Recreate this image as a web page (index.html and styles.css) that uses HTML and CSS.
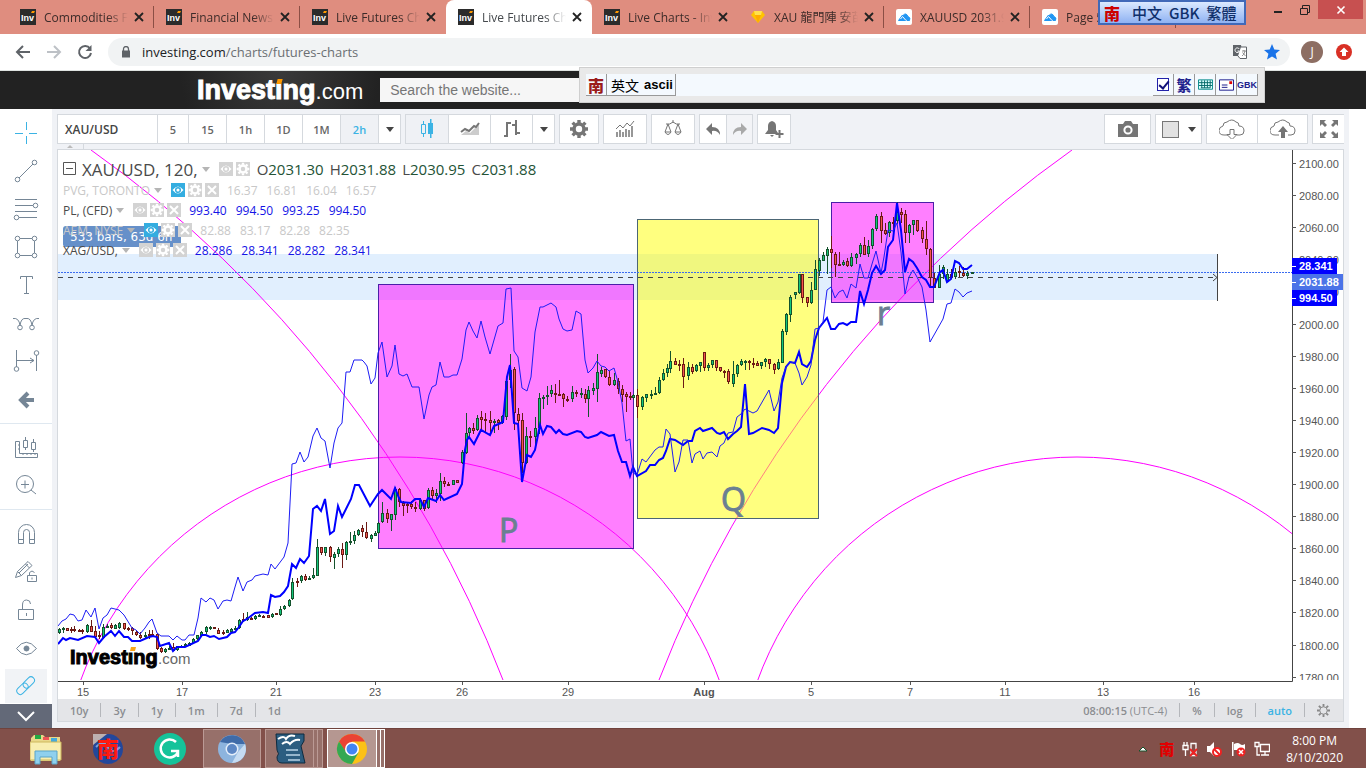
FILE: index.html
```
<!DOCTYPE html>
<html lang="en">
<head>
  <meta charset="UTF-8">
  <title>Live Futures Charts</title>
  <meta name="viewport" content="width=device-width, initial-scale=1.0">
  <link rel="stylesheet" href="styles.css">
</head>
<body>
  <!-- Shared icons -->
  <svg class="sprite" aria-hidden="true">
    <symbol id="inv" viewBox="0 0 16 16">
      <rect width="16" height="16" fill="#2b2b2b"/>
      <text x="1" y="12" font-family="Liberation Sans" font-weight="bold" font-size="9" fill="#fff">Inv</text>
      <path d="M11 4l1-2h3l-1 2z" fill="#f90"/>
    </symbol>
    <symbol id="cloudapp" viewBox="0 0 16 16">
      <rect width="16" height="16" rx="2" fill="#fff"/>
      <path d="M2.500 11.500L6.500 6l3.500 5.500zM7 6.500Q10 3 12 7.500q3 1 1.500 4H11z" fill="#2196f3" stroke="#2196f3"/>
      <path d="M4.500 10l2-2.500L10 11.500" fill="none" stroke="#fff"/>
    </symbol>
    <symbol id="close" viewBox="0 0 10 10"><path d="M1 1l8 8M9 1L1 9" stroke="#222" stroke-width="1.800"/></symbol>
    <symbol id="eye" viewBox="0 0 14 14">
      <path d="M1.500 7Q7 0 12.500 7Q7 14 1.500 7z" fill="#fff"/>
      <circle cx="7" cy="7" r="2.300" fill="none" stroke="currentColor" stroke-width="1.500"/>
    </symbol>
    <symbol id="cog" viewBox="0 0 20 20">
      <circle cx="10" cy="10" r="5" fill="none" stroke="currentColor" stroke-width="3.600"/>
      <path d="M10 1v3M10 16v3M1 10h3M16 10h3M3.600 3.600l2 2M14.400 14.400l2 2M3.600 16.400l2-2M14.400 5.600l2-2" stroke="currentColor" stroke-width="3.400"/>
    </symbol>
    <symbol id="cross" viewBox="0 0 14 14"><path d="M3 3l8 8M11 3l-8 8" stroke="#fff" stroke-width="2"/></symbol>
  </svg>

  <!-- Browser tabs -->
  <div class="tabs">
    <div class="tab"><svg class="fav"><use href="#inv"/></svg><span>Commodities Futures</span><button aria-label="Close tab"><svg><use href="#close"/></svg></button></div>
    <div class="tab"><svg class="fav"><use href="#inv"/></svg><span>Financial News</span><button aria-label="Close tab"><svg><use href="#close"/></svg></button></div>
    <div class="tab no-line"><svg class="fav"><use href="#inv"/></svg><span>Live Futures Charts</span><button aria-label="Close tab"><svg><use href="#close"/></svg></button></div>
    <div class="tab active"><svg class="fav"><use href="#inv"/></svg><span>Live Futures Charts</span><button aria-label="Close tab"><svg><use href="#close"/></svg></button></div>
    <div class="tab"><svg class="fav"><use href="#inv"/></svg><span>Live Charts - Investing</span><button aria-label="Close tab"><svg><use href="#close"/></svg></button></div>
    <div class="tab"><svg class="fav" viewBox="0 0 16 16"><path d="M4 2h8l3 4-7 8-7-8z" fill="#ffc400"/><path d="M4 2h8l-1 4H5z" fill="#ffe14d"/><path d="M5 6h6l-3 8z" fill="#ffab00"/></svg><span>XAU 龍門陣 安苗</span><button aria-label="Close tab"><svg><use href="#close"/></svg></button></div>
    <div class="tab"><svg class="fav"><use href="#cloudapp"/></svg><span>XAUUSD 2031.9</span><button aria-label="Close tab"><svg><use href="#close"/></svg></button></div>
    <div class="tab"><svg class="fav"><use href="#cloudapp"/></svg><span>Page 5</span></div>
    <div class="window-buttons">
      <button class="win" aria-label="Minimize"><svg viewBox="0 0 12 12"><path d="M2 8h8" stroke="#222" stroke-width="2"/></svg></button>
      <button class="win" aria-label="Restore"><svg viewBox="0 0 12 12" fill="none" stroke="#222"><path d="M1.500 4.500h7v6h-7zM3.500 4V1.500h7v7H9"/></svg></button>
      <button class="win win-close" aria-label="Close"><svg viewBox="0 0 12 12"><path d="M2.500 2.500l7 7M9.500 2.500l-7 7" stroke="#fff" stroke-width="1.600"/></svg></button>
    </div>
    <div class="ime-top"><b>南</b><span>中文</span><span>GBK</span><span>繁體</span></div>
  </div>

  <!-- Address bar -->
  <div class="address">
    <button aria-label="Back"><svg viewBox="0 0 16 16"><path d="M15 8H2M8 2L2 8l6 6" fill="none" stroke="#5f6368" stroke-width="2"/></svg></button>
    <button aria-label="Forward"><svg viewBox="0 0 16 16"><path d="M1 8h13M8 2l6 6-6 6" fill="none" stroke="#bdc1c6" stroke-width="2"/></svg></button>
    <button aria-label="Reload"><svg viewBox="0 0 16 16"><path d="M13 4.500A6 6 0 1 0 14 9" fill="none" stroke="#5f6368" stroke-width="2"/><path d="M14.500 1v6h-6z" fill="#5f6368"/></svg></button>
    <div class="omnibox">
      <svg viewBox="0 0 10 12" class="lock"><path d="M1 4.500h8v7H1z" fill="#5f6368"/><path d="M2.500 5V3a2.500 2.500 0 0 1 5 0v2" fill="none" stroke="#5f6368" stroke-width="1.300"/></svg>
      <a href="#" class="url"><b>investing.com</b>/charts/futures-charts</a>
      <svg viewBox="0 0 16 16" class="translate"><path d="M1 1h8l2 11H1z" fill="#5f6368"/><path d="M9 3h5.500v11.500H8L6 12" fill="#fff" stroke="#5f6368"/><path d="M7.300 5A2.300 2.300 0 1 0 7.500 7H5.500" stroke="#fff" fill="none"/><path d="M10 7h4M12 6v1M13 7q-1 4-3 5M10.500 8.500l3 3.500" fill="none" stroke="#777" stroke-width=".8"/></svg>
      <svg viewBox="0 0 16 16" class="star"><path d="M8 0l2.300 5.500 5.700.5-4.400 3.800L13 15.500 8 12.400 3 15.500l1.400-5.700L0 6l5.700-.5z" fill="#1a73e8"/></svg>
    </div>
    <span class="avatar">J</span>
    <button aria-label="Update"><svg viewBox="0 0 16 16"><circle cx="8" cy="8" r="8" fill="#d93025"/><path d="M8 3.500l4.500 4.500H10v4H6V8H3.500z" fill="#fff"/></svg></button>
  </div>

  <!-- Site header -->
  <header class="site-header">
    <a href="#" class="logo">Invest<i>ı</i>ng<small>.com</small></a>
    <input type="text" class="search" placeholder="Search the website..." aria-label="Search the website">
    <div class="ime-bar">
      <b class="nan">南</b><span class="mode">英文 <b>ascii</b></span>
      <div class="ime-tools">
        <label><input type="checkbox" checked aria-label="Enable"></label>
        <span>繁</span>
        <span><svg viewBox="0 0 16 12"><path d="M.5.500h15v10H.500z" fill="#dff" stroke="#088"/><path d="M1 3.500h14M1 6.500h14M4 1v8M7 1v8M10 1v8M13 1v8M3 9h10" stroke="#066"/></svg></span>
        <span><svg viewBox="0 0 16 12"><path d="M.5.500h15v11H.500z" fill="#fff" stroke="#118"/><path d="M3 6h6M3 8.500h6" stroke="#118"/><path d="M11 2h3v3h-3z" fill="#d00"/></svg></span>
        <span class="gbk">GBK</span>
      </div>
    </div>
  </header>

  <main class="workspace">
    <!-- Drawing tools -->
    <nav class="tools">
      <button aria-label="Cross" class="on"><svg viewBox="0 0 24 24"><path d="M1 12.500h8M15 12.500h8M12.500 1v8M12.500 15v8"/></svg></button>
      <button aria-label="Trend line"><svg viewBox="0 0 24 24"><circle cx="3.500" cy="20.500" r="2.300"/><circle cx="20.500" cy="3.500" r="2.300"/><path d="M5 19L19 5"/></svg></button>
      <button aria-label="Fibonacci"><svg viewBox="0 0 24 24"><path d="M1 2.500h22M1 8.500h18M1 14.500h22M5 20.500h18"/><circle cx="21.500" cy="8.500" r="2.300"/><circle cx="2.500" cy="20.500" r="2.300"/></svg></button>
      <button aria-label="Shapes"><svg viewBox="0 0 24 24"><path d="M6 3.500h12M6 20.500h12M3.500 6v12M20.500 6v12"/><circle cx="3.500" cy="3.500" r="2.300"/><circle cx="20.500" cy="3.500" r="2.300"/><circle cx="3.500" cy="20.500" r="2.300"/><circle cx="20.500" cy="20.500" r="2.300"/></svg></button>
      <button aria-label="Text"><svg viewBox="0 0 24 24"><path d="M6.500 6V3.500h12V6M12.500 3.500v17M10 20.500h5"/></svg></button>
      <button aria-label="Patterns"><svg viewBox="0 0 24 24"><path d="M-1 7.500q6-1 7 7q1-8 6-7q5-1 6 7q1-8 7-7"/><circle cx="6" cy="16.500" r="2.300"/><circle cx="18" cy="16.500" r="2.300"/></svg></button>
      <button aria-label="Forecast"><svg viewBox="0 0 24 24"><path d="M2.500 1v17M22.500 6v16M3 11.500h17M16 9l4 2.500-4 2.500"/><circle cx="2.500" cy="20" r="2.300"/><circle cx="22.500" cy="4" r="2.300"/></svg></button>
      <button aria-label="Arrow"><svg viewBox="0 0 24 24"><path d="M20 13H7M14 6l-7 7 7 7" stroke-width="4"/></svg></button>
      <hr>
      <button aria-label="Measure"><svg viewBox="0 0 24 24"><path d="M1.500 6.500h4v12h18v4h-22zM9 18v2M13 18v2M17 18v2M21 18v2M6 10H4M6 14H4M9.500 5.500h4v7h-4zM17.500 7.500h4v7h-4zM11.500 2v3M11.500 13v2M19.500 4v3M19.500 15v2"/></svg></button>
      <button aria-label="Zoom"><svg viewBox="0 0 24 24"><circle cx="11" cy="11" r="8.500"/><path d="M17 17l5 4M7 11.500h8M11 7.500v8"/></svg></button>
      <hr>
      <button aria-label="Magnet"><svg viewBox="0 0 24 24"><path d="M4.500 22.500v-11a8 8 0 0 1 16 0v11h-5v-11a3 3 0 0 0-6 0v11zM4.500 18.500h5M15.500 18.500h5"/></svg></button>
      <button aria-label="Stay in drawing mode"><svg viewBox="0 0 24 24"><path d="M1.500 18.500l2-6L14 2.500l4 4L7.500 16.500zM3.500 12.500l4 4M11.500 5l4 4M5 14l9-9"/><path d="M13.500 16.500h9v6h-9zM15.500 16v-2.500q2.500-3 5 0M18 18.500v2"/></svg></button>
      <button aria-label="Lock drawings"><svg viewBox="0 0 24 24"><path d="M4.500 12.500h15v10h-15zM8.500 12V8q0-5 4-5t4 4M12.500 16v3"/></svg></button>
      <button aria-label="Hide drawings"><svg viewBox="0 0 24 24"><path d="M2.500 13.500Q12 1 22.500 13.500Q12 26 2.500 13.500z"/><circle cx="12.500" cy="13.500" r="2.500" fill="#758696"/></svg></button>
      <button aria-label="Link" class="on picked"><svg viewBox="0 0 24 24"><g transform="rotate(-45 12 12)"><rect x="1" y="8" width="13" height="7" rx="3.500"/><rect x="10" y="8" width="13" height="7" rx="3.500"/></g></svg></button>
      <button class="more" aria-label="More tools"><svg viewBox="0 0 24 24"><path d="M4 8l8 8 8-8"/></svg></button>
    </nav>

    <section class="panel">
      <div class="toolbar">
        <div class="group"><button class="symbol">XAU/USD</button><button class="w31">5</button><button>15</button><button>1h</button><button>1D</button><button>1M</button><button class="on">2h</button><button class="caret" aria-label="Intervals"></button></div>
        <div class="group">
          <button class="w43 on" aria-label="Candles"><svg viewBox="0 0 20 20"><path d="M6.500 2v3M6.500 15v3M4.500 5.500h4v9h-4z" fill="none" stroke="currentColor"/><path d="M11 4h5v11h-5zM13 0h1.500v19H13z" fill="currentColor"/></svg></button>
          <button class="w43" aria-label="Area"><svg viewBox="0 0 20 20"><path d="M1 16l5-4 4 2 9-9v11z" fill="#ccc"/><path d="M1 13l4-3 4 2 5-5 2 1 3-4" fill="none" stroke="currentColor" stroke-width="2"/></svg></button>
          <button class="w43" aria-label="Bars"><svg viewBox="0 0 20 20"><path d="M2 17h4M5 18V3M5 4h4M14 1v15M10 6h4M14 14h4" fill="none" stroke="currentColor" stroke-width="2"/></svg></button>
          <button class="caret" aria-label="Chart styles"></button>
        </div>
        <div class="group"><button aria-label="Properties"><svg><use href="#cog"/></svg></button></div>
        <div class="group"><button class="w43" aria-label="Indicators"><svg viewBox="0 0 20 20"><path d="M2 13v5M5 11v7M8 13v5M11 10v8M14 11v7M17 7v11" stroke="currentColor" stroke-width="1.500"/><path d="M1 10l4-4 3 3 4-5 3 3 4-5" fill="none" stroke="currentColor"/></svg></button></div>
        <div class="group"><button class="w43" aria-label="Balance"><svg viewBox="0 0 20 20"><path d="M3 5q4 1 7-2 3 3 7 2M10 1v3M5 5l-3 8h6zM15 5l-3 8h6zM2 13q3 5 6 0M12 13q3 5 6 0" fill="none" stroke="currentColor"/></svg></button></div>
        <div class="group"><button class="w27" aria-label="Undo"><svg viewBox="0 0 20 20"><path d="M3 10l6-6v4q8 0 8 8-3-5-8-4v4z" fill="currentColor"/></svg></button><button class="w27 off" aria-label="Redo"><svg viewBox="0 0 20 20"><path d="M17 10l-6-6v4q-8 0-8 8 3-5 8-4v4z" fill="currentColor"/></svg></button></div>
        <div class="group"><button class="w34" aria-label="Add alert"><svg viewBox="0 0 20 20"><path d="M1 15l3-4V7q0-4 4-5 4 1 4 5v4l2 3v1zM6 16h4l-2 2z" fill="currentColor"/><path d="M15.500 11v8M11.500 15h8" stroke="currentColor" stroke-width="2"/></svg></button></div>
        <div class="group push"><button class="w46" aria-label="Snapshot"><svg viewBox="0 0 20 20"><path d="M0 5h5l2-3h6l2 3h5v13H0z" fill="currentColor"/><circle cx="10" cy="11" r="3.600" fill="none" stroke="#fff" stroke-width="2"/></svg></button></div>
        <div class="group"><button class="w46 swatch" aria-label="Layout"><i></i></button></div>
        <div class="group">
          <button class="w51" aria-label="Load"><svg viewBox="0 0 26 20"><path d="M9 16H5Q0 16 0 11.500 0 8 4 7q0-4 4-4 5-4 9 0 3 0 3 4 5 0 5 5 0 4-4 4h-3" fill="none" stroke="currentColor"/><path d="M11 10.500h4v5h3l-5 5-5-5h3z" fill="none" stroke="currentColor"/></svg></button>
          <button class="w51" aria-label="Save"><svg viewBox="0 0 26 20"><path d="M9 16H5Q0 16 0 11.500 0 8 4 7q0-4 4-4 5-4 9 0 3 0 3 4 5 0 5 5 0 4-4 4h-3" fill="none" stroke="currentColor"/><path d="M11 19v-6H8l5-6 5 6h-3v6z" fill="currentColor"/></svg></button>
        </div>
        <div class="group"><button class="w31" aria-label="Fullscreen"><svg viewBox="0 0 20 20"><path d="M1 1h6L5 3l3 3-2 2-3-3-2 2zM19 1h-6l2 2-3 3 2 2 3-3 2 2zM1 19h6l-2-2 3-3-2-2-3 3-2-2zM19 19h-6l2-2-3-3 2-2 3 3 2-2z" fill="currentColor"/></svg></button></div>
      </div>
      <div class="fold"><i></i></div>

      <div class="chart-frame">
        <div class="chart">
          <svg id="plot" viewBox="58 150 1285 550" preserveAspectRatio="xMinYMin slice">
            <defs>
              <clipPath id="pane"><rect x="58" y="150" width="1285" height="530"/></clipPath>
              <clipPath id="canvas"><rect x="58" y="150" width="1234" height="530"/></clipPath>
            </defs>
            <rect class="range" x="58" y="254" width="1159" height="46"/>
            <g clip-path="url(#canvas)">
              <g class="arcs">
                <path d="M91 150A1160 1160 0 0 1 503 680"/>
                <path d="M659 680A1165 1165 0 0 1 1072 150"/>
                <circle cx="400" cy="797" r="340"/>
                <circle cx="1077" cy="797" r="340"/>
              </g>
              <rect class="zone pink" x="378.500" y="284.500" width="255" height="264"/>
              <rect class="zone yellow" x="637.500" y="219.500" width="181" height="299"/>
              <rect class="zone pink" x="831.500" y="202.500" width="102" height="100"/>
              <g class="letters"><text x="499" y="542">P</text><text x="721" y="511">Q</text><text x="877" y="325">r</text></g>
              <rect x="63" y="226" width="118" height="21" rx="3" class="bars-tag"/>
              <text x="70" y="241" class="bars-text">533 bars, 63d 6h</text>
              <path class="last" d="M58 272.500H1292"/>
              <path class="mid" d="M58 277.500H1213"/>
              <path class="edge" d="M1217.500 254v47M1213 274l4 3.500-4 3.500"/>
              <g id="candles"></g>
              <polyline id="silver" class="thick"/>
              <polyline id="platinum" class="thin"/>
            </g>
            <g class="watermark"><text x="70" y="664">Invest&#305;ng</text><text x="158" y="664" class="com">.com</text><path d="M130 651l1-4h5l-1 4z"/></g>
            <path class="axis" d="M58 681.500H1292.500V150"/>
            <g id="axis-y" clip-path="url(#pane)"></g>
            <g id="axis-x"></g>
            <g class="tags">
              <rect x="1292" y="258" width="45" height="16"/><text x="1299" y="270">28.341</text>
              <rect x="1292" y="290" width="45" height="16"/><text x="1299" y="302">994.50</text>
              <rect x="1292" y="274" width="51" height="16" class="price"/><text x="1299" y="286">2031.88</text>
              <path d="M1292 266.500h4M1292 282.500h4M1292 298.500h4"/>
            </g>
          </svg>

          <div class="legend">
            <div class="row main-row"><svg viewBox="0 0 14 14" class="minus"><path d="M.5.500h12v12H.500zM3 6.500h7"/></svg><span class="name">XAU/USD, 120,</span><i class="tri"></i><b class="sq"><svg><use href="#eye"/></svg></b><b class="sq"><svg><use href="#cog"/></svg></b><span class="ohlc">O<em>2031.30</em></span><span class="ohlc">H<em>2031.88</em></span><span class="ohlc">L<em>2030.95</em></span><span class="ohlc">C<em>2031.88</em></span></div>
            <div class="row dim"><span class="name">PVG, TORONTO</span><i class="tri"></i><b class="sq hidden"><svg><use href="#eye"/></svg></b><b class="sq"><svg><use href="#cog"/></svg></b><b class="sq"><svg><use href="#cross"/></svg></b><span class="val">16.37</span><span class="val">16.81</span><span class="val">16.04</span><span class="val">16.57</span></div>
            <div class="row"><span class="name">PL, (CFD)</span><i class="tri"></i><b class="sq"><svg><use href="#eye"/></svg></b><b class="sq"><svg><use href="#cog"/></svg></b><b class="sq"><svg><use href="#cross"/></svg></b><span class="val">993.40</span><span class="val">994.50</span><span class="val">993.25</span><span class="val">994.50</span></div>
            <div class="row dim"><span class="name">AEM, NYSE</span><i class="tri"></i><b class="sq hidden"><svg><use href="#eye"/></svg></b><b class="sq"><svg><use href="#cog"/></svg></b><b class="sq"><svg><use href="#cross"/></svg></b><span class="val">82.88</span><span class="val">83.17</span><span class="val">82.28</span><span class="val">82.35</span></div>
            <div class="row"><span class="name">XAG/USD,</span><i class="tri"></i><b class="sq"><svg><use href="#eye"/></svg></b><b class="sq"><svg><use href="#cog"/></svg></b><b class="sq"><svg><use href="#cross"/></svg></b><span class="val">28.286</span><span class="val">28.341</span><span class="val">28.282</span><span class="val">28.341</span></div>
          </div>
        </div>
        <div class="ranges">
          <button>10y</button><button>3y</button><button>1y</button><button>1m</button><button>7d</button><button>1d</button>
          <span class="clock"><b>08:00:15</b> (UTC-4)</span><button>%</button><button>log</button><button class="auto">auto</button><button aria-label="Settings"><svg viewBox="0 0 14 14" fill="none" stroke="#888"><circle cx="7" cy="7" r="4"/><path stroke-width="2" d="M7 0v3M7 11v3M0 7h3M11 7h3M2 2l2 2M10 10l2 2M2 12l2-2M10 4l2-2"/></svg></button>
        </div>
      </div>
    </section>
    <aside class="side"></aside>
  </main>

  <!-- Windows taskbar -->
  <footer class="taskbar">
    <button class="app" aria-label="File Explorer"><svg viewBox="0 0 32 32"><path d="M1 5l3-3h9l2 2h15v24H1z" fill="#e9d88a"/><path d="M5 2h6v4H5z" fill="#2a4"/><path d="M13 4h6v3h-6z" fill="#e55"/><path d="M21 5h6v4h-6z" fill="#4ad"/><path d="M0 9h31v18H0z" fill="#f8eeb0" stroke="#cdb85d"/><path d="M5 31V18h22v13h-5v-7H10v7z" fill="#8fd0ee" stroke="#5ba5c9"/></svg></button>
    <button class="app" aria-label="Input method"><svg viewBox="0 0 32 32"><circle cx="16" cy="16" r="15" fill="#23479b"/><path d="M1 1h14L1 12z" fill="#bcb0b0"/><path d="M4 14q8-8 12 0t12 0" stroke="#7fa0dd" fill="none" stroke-width="2"/><text x="5" y="24" font-family="Noto Sans CJK TC" font-size="22" font-weight="900" fill="#ff1a10">南</text></svg></button>
    <button class="app" aria-label="Grammarly"><svg viewBox="0 0 32 32"><circle cx="16" cy="16" r="16" fill="#15c39a"/><path d="M22 9a9 9 0 1 0 2 10M17 18h7v6" fill="none" stroke="#fff" stroke-width="2.500"/></svg></button>
    <button class="app open" aria-label="Chromium"><svg viewBox="0 0 32 32"><circle cx="16" cy="16" r="14" fill="#8db4de"/><path d="M4 9a14 14 0 0 1 25 2H16z" fill="#3f6ba8"/><path d="M16 30l6-11 7-8a14 14 0 0 1-13 19z" fill="#c5dbf2"/><circle cx="16" cy="16" r="6.500" fill="#e4eefa"/><circle cx="16" cy="16" r="5" fill="#5c87c4"/></svg></button>
    <button class="app open stack" aria-label="Writer"><svg viewBox="0 0 32 32"><path d="M2 1h28v7l-3 5 4 17H8q-5 0-5-6 3-3 0-7z" fill="#2c5d80" stroke="#0d2a3f"/><path d="M4 6q6-4 8 0 3-5 9-3M8 11q5-4 8 0 4-5 10-4" fill="none" stroke="#fff" stroke-width="2"/><path d="M12 17h12M12 22h14M14 27h12" stroke="#b9d3e6" stroke-width="1.500"/></svg></button>
    <button class="app open stack current" aria-label="Chrome"><svg viewBox="0 0 32 32"><circle cx="16" cy="16" r="15" fill="#fbc116"/><path d="M3 8.500a15 15 0 0 1 26 0H16l-6 11z" fill="#ea4335"/><path d="M3 8.500a15 15 0 0 0 13 22.500l6.500-11.500-12 0z" fill="#34a853"/><circle cx="16" cy="16" r="7" fill="#fff"/><circle cx="16" cy="16" r="5.500" fill="#4285f4"/></svg></button>
    <div class="tray">
      <svg viewBox="0 0 16 16" class="up"><path d="M4 10l4-4 4 4z" fill="#fff"/></svg>
      <b class="tray-nan">南</b>
      <svg viewBox="0 0 16 16" fill="none" stroke="#fff"><path d="M2 1v3M5 1v3M1 4.500h5v4H1zM3.500 9v6M9 2.500h5v12H9z" stroke-width="1.300"/><path d="M8 8l7 7M15 8l-7 7" stroke="#e22" stroke-width="2"/></svg>
      <svg viewBox="0 0 16 16"><path d="M1 5h3l4-4v14l-4-4H1z" fill="#fff"/><circle cx="11" cy="11" r="4" fill="#fff" stroke="#e22" stroke-width="2"/><path d="M8 8l6 6" stroke="#e22" stroke-width="2"/></svg>
      <svg viewBox="0 0 16 16"><path d="M2 1h1.500v14H2zM4 3q4-2 6 0t5 0v6H4z" fill="#fff"/><circle cx="11" cy="11" r="4.500" fill="#e22"/><path d="M9 9l4 4M13 9l-4 4" stroke="#fff" stroke-width="1.500"/></svg>
      <svg viewBox="0 0 16 16" fill="none" stroke="#fff" stroke-width="1.300"><path d="M6.500 3.500h9v7h-9zM7 14h8M11 11v3M1 1.500h4v4H1zM3 6v8h3"/></svg>
      <div class="time">8:00 PM<br>8/10/2020</div>
    </div>
  </footer>

  <script src="chart.js"></script>
</body>
</html>
```

FILE: chart.js
```
const NS = 'http://www.w3.org/2000/svg';

// x, high, body top, body bottom, low, direction
const candles = `59 628 629 633 634 u,63 627 628 630 633 u,67 628 628 631 631 d,71 627 629 631 633 d,74 626 629 631 632 d,79 629 630 631 632 d,82 629 630 632 634 d,87 624 625 632 633 u,91 620 626 632 632 d,95 626 631 637 639 d,99 631 635 637 639 d,103 624 627 638 639 u,107 624 626 628 628 u,111 623 625 628 629 d,115 624 625 629 629 u,119 622 623 628 629 u,124 623 623 629 630 d,128 627 628 630 631 d,132 627 628 631 635 d,136 630 632 635 636 d,140 632 635 638 639 d,145 632 635 637 638 u,149 630 634 636 639 d,152 630 634 635 636 d,157 633 634 649 650 d,161 647 648 652 653 d,165 648 649 652 653 u,169 646 648 649 650 u,173 643 647 651 651 d,177 646 646 650 651 u,181 645 646 647 648 u,185 643 644 646 647 u,189 642 643 646 646 u,193 638 639 643 643 u,197 635 635 639 640 u,201 631 632 636 636 u,206 626 627 632 634 u,210 626 627 629 630 u,214 627 627 629 629 d,218 628 630 634 634 d,223 630 632 633 635 d,227 629 630 633 633 u,231 628 629 632 632 u,235 626 628 630 630 u,239 619 620 628 629 u,243 613 619 621 622 d,247 612 617 620 621 u,251 617 618 620 620 d,255 615 616 619 620 u,259 614 615 617 617 u,263 615 616 617 618 d,268 615 615 618 618 d,272 613 614 617 618 u,276 613 613 615 615 d,280 606 609 615 616 u,284 605 606 609 610 u,289 599 600 606 607 u,292 578 582 599 600 u,297 578 581 583 587 d,301 575 576 581 583 u,305 574 576 580 581 d,309 576 578 580 580 u,313 568 575 578 579 u,317 539 547 576 576 u,321 547 547 553 555 d,325 547 547 553 556 u,330 546 547 557 562 d,334 552 554 558 569 u,338 547 549 554 557 u,342 543 549 555 568 d,346 541 542 555 560 u,350 532 541 542 545 u,354 531 535 541 544 u,358 529 530 535 536 u,362 525 528 532 537 d,366 522 532 538 539 d,371 534 535 539 542 u,375 531 533 536 536 u,378 522 523 533 534 u,382 502 513 522 523 u,387 509 513 519 523 d,391 514 514 520 531 u,395 487 489 515 520 u,399 488 489 502 507 d,403 501 503 506 516 d,407 503 504 506 513 d,411 501 504 507 509 d,415 502 507 509 512 d,420 498 500 509 510 u,424 500 500 509 511 d,428 488 490 508 509 u,432 487 490 496 499 d,436 489 493 496 503 u,440 473 481 494 501 u,444 477 481 484 487 d,448 482 484 485 486 d,453 480 480 485 485 u,457 480 480 483 483 d,462 450 452 463 464 u,466 413 433 453 454 u,469 427 428 433 438 u,473 423 428 431 434 d,477 415 418 430 431 u,481 411 417 420 431 d,485 413 419 421 432 d,490 411 420 423 433 d,494 419 421 423 433 u,498 419 420 423 430 d,502 415 416 423 424 u,506 378 381 417 420 u,510 354 370 380 388 u,514 367 369 413 430 d,518 408 414 421 424 d,522 413 420 463 473 d,526 427 436 463 464 u,530 431 436 437 447 d,535 417 428 437 450 u,539 393 398 428 434 u,543 395 397 399 409 u,547 386 395 397 405 u,551 385 390 394 397 u,555 384 393 394 403 d,559 380 394 395 396 d,563 393 394 399 407 d,567 396 399 400 402 d,572 386 392 399 402 u,576 390 392 394 397 d,581 388 393 394 398 u,585 389 394 399 403 d,588 386 390 399 417 u,593 383 388 391 395 u,597 354 372 389 402 u,601 367 370 374 377 u,605 369 369 377 378 d,609 371 377 385 386 d,614 373 380 385 386 u,618 378 381 389 394 d,622 385 389 395 402 d,626 392 394 397 412 d,630 392 396 398 400 d,633 394 395 398 400 u,637 389 395 407 418 d,642 396 397 407 410 u,646 394 394 398 402 u,651 390 394 395 399 u,655 387 393 394 395 u,659 377 380 393 394 u,663 369 373 380 381 u,667 364 368 373 377 u,670 351 361 369 373 u,675 358 361 365 365 d,679 360 364 365 371 d,683 358 364 377 388 d,688 362 367 376 380 u,692 364 367 372 374 d,696 364 365 371 372 u,700 362 362 366 372 u,704 352 352 368 371 d,708 363 365 368 371 u,712 360 360 365 368 u,716 360 360 368 371 d,720 367 367 371 372 d,724 370 371 372 378 d,728 369 371 382 384 d,733 361 374 384 387 u,737 364 365 374 377 u,741 359 361 365 366 u,745 360 361 362 370 u,749 360 361 363 370 d,753 358 363 364 368 d,757 361 363 366 366 d,761 362 362 366 369 u,765 358 359 362 367 u,769 359 359 364 369 d,774 363 364 370 374 d,778 359 362 369 370 u,782 329 331 363 363 u,786 313 314 332 335 u,790 295 297 315 322 u,795 292 292 295 299 u,799 274 274 293 294 u,802 274 274 298 303 d,807 297 297 303 307 d,811 282 290 303 304 u,815 260 269 290 290 u,819 258 260 271 276 u,823 252 255 261 261 u,827 247 249 256 274 u,831 236 249 253 268 d,835 252 254 265 277 d,839 252 264 265 266 d,843 260 262 265 266 u,847 258 261 266 267 d,851 253 257 266 267 u,856 253 254 258 264 u,860 243 245 254 257 u,864 237 245 255 255 d,868 240 246 254 257 u,872 228 229 246 249 u,876 214 216 229 231 u,881 212 216 231 243 d,885 223 230 234 235 d,889 221 222 233 237 u,893 217 222 223 231 d,897 202 212 221 224 u,901 208 212 215 223 d,905 210 214 233 243 d,909 224 225 233 243 u,913 220 220 225 235 u,917 220 220 231 232 d,922 227 230 239 243 d,926 221 239 249 255 d,930 248 249 278 286 d,934 273 278 288 288 d,939 265 274 288 288 u,943 265 267 274 279 u,947 269 274 281 282 u,951 269 274 277 279 d,955 268 272 277 279 u,959 266 271 272 277 d,963 267 273 276 277 d,967 271 273 276 279 u,972 272 272 274 274 u`;

const platinum = '58,626 62,621 66,619 70,614 74,615 78,621 82,620 86,610 91,617 95,608 99,629 103,618 107,615 111,608 115,609 119,610 124,615 132,628 136,630 140,634 145,628 149,622 152,619 157,633 161,636 169,636 173,640 177,636 182,640 185,640 189,635 194,635 198,618 201,598 206,602 210,598 214,600 218,609 223,601 227,600 231,601 235,587 238,577 243,591 247,582 252,580 255,576 263,574 268,575 271,564 275,569 284,557 288,543 292,464 296,463 300,452 304,462 308,457 313,436 317,428 321,438 325,441 330,468 334,443 338,428 342,423 346,372 350,372 354,360 362,360 364,362 367,366 371,384 375,378 378,353 382,342 387,377 392,366 395,345 399,374 403,376 407,374 412,387 419,387 424,419 429,395 432,387 436,385 440,362 444,377 449,377 453,375 457,375 462,359 466,330 469,322 473,331 477,338 481,321 485,337 490,354 498,326 503,323 506,289 511,288 514,351 518,357 522,388 527,391 531,377 535,332 540,307 543,307 551,303 556,307 559,319 563,329 567,331 572,330 576,311 581,314 585,360 588,373 593,368 597,361 601,366 605,367 609,371 614,368 618,382 622,403 626,441 630,439 633,473 637,475 642,459 646,462 655,450 659,447 663,447 666,429 670,434 675,472 679,462 683,440 688,440 692,463 695,454 700,451 703,459 707,453 712,452 717,457 720,446 724,443 728,433 733,432 737,417 741,414 745,409 749,411 753,413 757,411 769,390 774,411 778,402 782,378 786,367 790,362 795,363 799,373 802,385 807,377 811,365 815,329 819,328 823,322 827,290 831,287 835,298 839,292 843,290 847,298 851,284 856,288 860,264 864,278 868,278 872,264 876,251 881,273 884,257 888,230 893,231 897,223 901,252 905,294 909,277 913,270 917,277 922,287 926,310 930,342 934,335 943,319 947,304 951,303 955,289 959,292 963,297 967,293 972,291';

const silver = '58,644 63,638 66,640 70,638 78,640 87,636 95,637 99,643 104,637 111,631 115,636 119,631 124,637 128,637 132,641 140,641 149,637 153,636 157,637 160,646 169,643 173,651 177,647 185,647 198,641 202,635 206,635 210,637 214,636 219,639 227,637 231,633 235,632 239,627 243,621 247,619 255,613 263,612 268,613 271,595 275,597 280,596 284,592 288,586 292,564 296,568 300,559 304,563 309,556 313,509 317,506 321,511 325,499 330,534 334,531 338,506 342,517 351,499 355,485 359,485 370,506 378,494 382,490 391,499 395,488 399,498 401,502 411,503 415,499 420,499 424,507 428,498 436,501 440,495 444,500 457,494 462,484 465,450 467,440 469,437 474,444 481,430 490,435 494,426 503,422 507,377 510,365 514,423 518,424 522,482 527,455 531,457 535,450 540,425 543,434 547,426 551,427 556,433 559,430 563,434 567,435 577,431 581,432 585,437 588,438 597,435 601,432 609,436 614,435 618,451 622,462 626,462 630,476 633,467 637,476 646,471 650,465 655,465 659,460 663,458 666,451 670,439 675,440 683,445 688,441 692,441 695,431 700,428 703,431 712,428 717,433 720,434 724,432 728,439 733,434 737,431 741,427 745,384 749,434 753,433 762,428 769,430 774,433 778,428 782,383 786,367 790,362 795,363 799,352 802,364 807,367 811,361 815,340 819,328 827,318 831,329 835,329 839,324 843,323 847,325 851,322 856,322 860,291 864,304 868,290 872,273 876,266 881,274 885,270 888,247 893,240 897,203 901,230 905,272 909,259 913,262 917,268 922,277 926,280 930,287 934,287 940,272 943,270 947,282 951,279 955,261 959,263 963,269 967,269 972,265';

function add(parent, tag, attrs, text) {
  const el = document.createElementNS(NS, tag);
  for (const key in attrs) el.setAttribute(key, attrs[key]);
  if (text) el.textContent = text;
  parent.appendChild(el);
}

const layer = document.getElementById('candles');
candles.split(',').forEach(row => {
  const [x, high, top, bottom, low, dir] = row.split(' ');
  const cls = dir === 'u' ? 'up' : 'down';
  add(layer, 'path', { class: cls, d: `M${+x + 0.5} ${high}V${low}` });
  add(layer, 'rect', { class: cls, x: x - 0.5, y: +top + 0.5, width: 2, height: Math.max(bottom - top - 1, 1) });
});

document.getElementById('platinum').setAttribute('points', platinum);
document.getElementById('silver').setAttribute('points', silver);

const axisY = document.getElementById('axis-y');
for (let i = 0; i <= 16; i++) {
  const y = Math.round(163 + i * 32.1);
  add(axisY, 'path', { d: `M1292 ${y + 0.5}h4` });
  add(axisY, 'text', { x: 1299, y: y + 5 }, (2100 - i * 20) + '.00');
}

const axisX = document.getElementById('axis-x');
const days = { 83: '15', 182: '17', 276: '21', 375: '23', 462: '26', 568: '29', 704: 'Aug', 811: '5', 910: '7', 1005: '11', 1103: '13', 1194: '16' };
for (const x in days) {
  add(axisX, 'path', { d: `M${+x + 0.5} 682v3` });
  add(axisX, 'text', { x, y: 696, class: days[x] === 'Aug' ? 'month' : 'day' }, days[x]);
}
```

FILE: styles.css
```
* {
  box-sizing: border-box;
}

html, body {
  margin: 0;
  height: 100%;
  overflow: hidden;
}

body {
  display: flex;
  flex-direction: column;
  font-family: "Open Sans", "Noto Sans CJK TC", sans-serif;
  font-size: 12px;
  background: #fff;
}

button {
  display: flex;
  align-items: center;
  justify-content: center;
  padding: 0;
  border: none;
  background: none;
  font-family: inherit;
  color: inherit;
  cursor: pointer;
}

a {
  text-decoration: none;
}

.sprite {
  position: absolute;
  width: 0;
  height: 0;
}

/* browser tabs */
.tabs {
  position: relative;
  display: flex;
  flex: none;
  height: 34px;
  padding-left: 8px;
  background: #df8d7f;
}

.tab {
  display: flex;
  align-items: center;
  width: 146px;
  height: 34px;
  padding-left: 12px;
  border-right: 1px solid transparent;
  border-image: linear-gradient(transparent 20%, #8b4f45 20%, #8b4f45 80%, transparent 80%) 1;
  color: #3c2b29;
}

.tab.no-line {
  border-image: none;
}

.tab.active {
  background: #fff;
  border-image: none;
  border-radius: 8px 8px 0 0;
  color: #45494d;
}

.tab.active + .tab {
  border-image: none;
}

.fav {
  flex: none;
  width: 16px;
  height: 16px;
}

.tab span {
  flex: none;
  width: 84px;
  margin: 0 6px 0 8px;
  overflow: hidden;
  white-space: nowrap;
  -webkit-mask-image: linear-gradient(to right, #000 75%, transparent);
  mask-image: linear-gradient(to right, #000 75%, transparent);
}

.tab button svg {
  width: 10px;
  height: 10px;
}

.window-buttons {
  display: flex;
  align-items: flex-start;
  margin-left: auto;
  padding-right: 3px;
}

.win {
  width: 27px;
  height: 19px;
}

.win svg {
  width: 12px;
  height: 12px;
}

.win-close {
  width: 45px;
  background: #c75050;
}

.ime-top {
  position: absolute;
  top: 0;
  right: 120px;
  display: flex;
  align-items: center;
  gap: 7px;
  width: 148px;
  height: 25px;
  padding-left: 4px;
  border: 2px solid #4169b8;
  background: linear-gradient(#dbe9ff, #8fb2f2);
  font-family: "Noto Sans CJK TC", sans-serif;
  font-size: 16px;
  font-weight: 500;
  line-height: 20px;
  white-space: nowrap;
  color: #10306b;
}

.ime-top b {
  margin-right: 5px;
  font-weight: 900;
  color: #c00;
}

.ime-top span {
  font-size: 15px;
}

/* address bar */
.address {
  display: flex;
  flex: none;
  align-items: center;
  gap: 15px;
  height: 37px;
  padding: 0 14px 0 15px;
  border-bottom: 1px solid #dfe3e1;
}

.address button svg {
  width: 16px;
  height: 16px;
}

.omnibox {
  display: flex;
  flex: 1;
  align-items: center;
  height: 28px;
  margin-right: -4px;
  padding: 0 10px 0 13px;
  border-radius: 14px;
  background: #f1f3f4;
}

.lock {
  width: 10px;
  height: 12px;
  margin-right: 11px;
}

.url {
  flex: 1;
  font-size: 13px;
  color: #6b6f73;
}

.url b {
  font-weight: normal;
  color: #202124;
}

.translate, .star {
  width: 16px;
  height: 16px;
  margin-left: 16px;
}

.avatar {
  width: 22px;
  height: 22px;
  margin-right: -2px;
  border-radius: 50%;
  background: #8d6e63;
  line-height: 22px;
  text-align: center;
  color: #fff;
}

/* site header */
.site-header {
  position: relative;
  display: flex;
  flex: none;
  align-items: center;
  gap: 17px;
  height: 38px;
  padding-left: 197px;
  background: radial-gradient(circle at 280px 0, #3a3a3a, #222 100px);
}

.logo {
  font-family: "Liberation Sans", Arial, sans-serif;
  font-size: 27px;
  font-weight: bold;
  color: #fff;
  -webkit-text-stroke: 1px #fff;
}

.logo i {
  position: relative;
  font-style: normal;
}

.logo i::before {
  content: "";
  position: absolute;
  top: 4px;
  left: 2px;
  width: 5px;
  height: 5px;
  background: #f90;
  transform: skewX(-15deg);
}

.logo small {
  font-size: 22px;
  font-weight: normal;
  -webkit-text-stroke: 0;
}

.search {
  width: 210px;
  height: 24px;
  padding: 0 10px;
  border: none;
  background: #f6f6f6;
  font-family: "Liberation Sans", Arial, sans-serif;
  font-size: 14px;
}

.search::placeholder {
  color: #757575;
}

.ime-bar {
  position: absolute;
  z-index: 2;
  top: -4px;
  left: 579px;
  right: 101px;
  display: flex;
  align-items: center;
  height: 36px;
  padding: 6px;
  border: 1px solid #cfcfcf;
  background: linear-gradient(#f4f9fe, #f4f9fe) content-box, linear-gradient(#e9e9e9, #e9e9e9);
  font-family: "Noto Sans CJK TC", sans-serif;
  font-size: 14px;
}

.nan, .mode, .ime-tools > span {
  display: flex;
  align-items: center;
  justify-content: center;
  height: 22px;
  border-right: 1px solid #999;
  border-bottom: 1px solid #999;
}

.nan {
  width: 21px;
  font-size: 16px;
  font-weight: 900;
  color: #9b1c1c;
}

.mode {
  gap: 5px;
  padding: 0 2px 0 4px;
}

.mode b {
  font-family: "Liberation Sans", sans-serif;
  font-size: 13px;
}

.ime-tools {
  display: flex;
  align-items: center;
  margin-left: auto;
}

.ime-tools label {
  display: flex;
  padding: 4px;
  border-right: 1px solid #999;
  border-bottom: 1px solid #999;
}

.ime-tools input {
  position: relative;
  width: 12px;
  height: 13px;
  margin: 0;
  appearance: none;
  border: 1px solid #22a;
  background: #fff;
}

.ime-tools input:checked::after {
  content: "";
  position: absolute;
  top: 0;
  left: 3px;
  width: 4px;
  height: 8px;
  border: solid #117;
  border-width: 0 2px 2px 0;
  transform: rotate(40deg);
}

.ime-tools > span {
  width: 21px;
  font-size: 15px;
  font-weight: bold;
  color: #20208c;
}

.ime-tools svg {
  width: 15px;
  height: 12px;
}

.ime-tools .gbk {
  border-bottom-color: #999;
  font-family: "Liberation Sans", sans-serif;
  font-size: 9px;
}

/* workspace */
.workspace {
  display: flex;
  flex: 1;
  min-height: 0;
  background: #f0f2f6;
}

.tools {
  display: flex;
  flex: none;
  flex-direction: column;
  align-items: center;
  width: 52px;
  padding-top: 5px;
  background: #fff;
}

.tools button {
  flex: none;
  width: 42px;
  height: 38px;
  color: #758696;
}

.tools svg {
  width: 24px;
  height: 24px;
  fill: none;
  stroke: currentColor;
  overflow: visible;
}

.tools .on {
  color: #3bb3e4;
}

.tools .picked {
  height: 34px;
  margin-top: 3px;
  background: #f1f3f6;
}

.tools hr {
  width: 100%;
  margin: 5px 0 4px;
  border: none;
  border-top: 1px solid #dfe8f0;
}

.tools .more {
  width: 100%;
  height: 24px;
  margin-top: auto;
  background: #636978;
  color: #fff;
  stroke-width: 2;
}

.panel {
  display: flex;
  flex: 1;
  flex-direction: column;
  min-width: 0;
  padding: 5px 0 6px 5px;
}

.toolbar {
  display: flex;
  flex: none;
  gap: 4px;
  height: 30px;
  margin-right: -1px;
}

.group {
  display: flex;
  border: 1px solid #d5d9de;
  background: #fff;
}

.group.push {
  margin-left: auto;
}

.group button {
  width: 38px;
  font-size: 11px;
  font-weight: 600;
  color: #666;
}

.group button + button {
  border-left: 1px solid #d5d9de;
}

.group svg {
  width: 20px;
  height: 20px;
  color: #757575;
}

.group .symbol {
  width: 99px;
  padding-left: 7px;
  justify-content: flex-start;
  font-size: 12px;
  color: #444;
}

.group .w27 { width: 26px; }
.group .w31 { width: 31px; }
.group .w34 { width: 32px; }
.group .w43 { width: 42px; }
.group .w46 { width: 45px; }
.group .w51 { width: 50px; }

.group .w51 svg {
  width: 26px;
}

.group .on, .group .on svg {
  background: #eff1f5;
  color: #3bb3e4;
}

.group .off {
  background: #f3f4f7;
}

.group .off svg {
  color: #a9a9a9;
}

.group .caret {
  width: 22px;
}

.caret::after, .swatch::after {
  content: "";
  border: 4px solid transparent;
  border-top: 5px solid #444;
  border-bottom: none;
}

.swatch i {
  width: 17px;
  height: 17px;
  margin-right: 9px;
  border: 1px solid #777;
  background: #e2e2e2;
}

.fold {
  flex: none;
  width: 27px;
  height: 5px;
  border-right: 1px solid #d5d9de;
}

.fold i {
  display: block;
  width: 0;
  margin: 1px auto 0;
  border: 3px solid transparent;
  border-top: none;
  border-bottom-color: #bbb;
}

.chart-frame {
  display: flex;
  flex: 1;
  flex-direction: column;
  min-height: 0;
  border: 1px solid #d5d9de;
  background: #fff;
}

.chart {
  position: relative;
  flex: 1;
  min-height: 0;
}

#plot {
  display: block;
  width: 100%;
  height: 100%;
  font-family: "Liberation Sans", Arial, sans-serif;
  font-size: 11px;
}

.range { fill: #e1effe; }
.arcs { fill: none; stroke: #f0f; stroke-width: 1; }
.zone { fill-opacity: .5; }
.pink { fill: #f0f; stroke: #4b1fa8; }
.yellow { fill: #ff0; stroke: #4c6674; }

.letters {
  font-family: "Open Sans", sans-serif;
  font-size: 32px;
  fill: #6b7f92;
  stroke: #6b7f92;
}

.bars-tag { fill: #6690c9; }

.bars-text {
  font-family: "DejaVu Sans", sans-serif;
  font-size: 12px;
  fill: #fff;
}

.last { stroke: #3a6cf0; stroke-dasharray: 2 1; }
.mid { stroke: #444; stroke-dasharray: 5 5; }
.edge { fill: none; stroke: #444; }
.up { fill: #12c67c; stroke: #14532d; }
.down { fill: #f5564e; stroke: #6b1a14; }
.thin { fill: none; stroke: #1d1df5; stroke-width: 1; }
.thick { fill: none; stroke: #00f; stroke-width: 2; }

.watermark text {
  font-size: 20px;
  font-weight: bold;
  stroke: #000;
  stroke-width: 1;
}

.watermark .com {
  font-size: 15px;
  font-weight: normal;
  fill: #666;
  stroke: none;
}

.watermark path { fill: #f9a51a; }
.axis { fill: none; stroke: #444; }
#axis-y text, #axis-x text { fill: #555; }
#axis-y path, #axis-x path { stroke: #555; }
#axis-x text { text-anchor: middle; }
#axis-x .month { font-weight: bold; }
.tags { font-weight: bold; }
.tags rect { fill: #00f; }
.tags .price { fill: #4b73e8; }
.tags text { fill: #fff; }
.tags path { stroke: #fff; }

.legend {
  position: absolute;
  top: 8px;
  left: 5px;
  color: #4a4a4a;
}

.row {
  display: flex;
  align-items: center;
  height: 20px;
}

.main-row {
  height: 22px;
  font-size: 15px;
}

.main-row .name {
  font-size: 17px;
}

.minus {
  width: 14px;
  height: 14px;
  margin-right: 5px;
  fill: none;
  stroke: #555;
}

.tri {
  margin: 0 9px 0 4px;
  border: 4px solid transparent;
  border-top: 5px solid #b5b5b5;
  border-bottom: none;
}

.sq {
  display: flex;
  width: 14px;
  height: 14px;
  margin-right: 3px;
  background: #d3d3d3;
  color: #d3d3d3;
}

.sq svg {
  width: 14px;
  height: 14px;
}

.sq use[href="#cog"] {
  color: #fff;
}

.sq.hidden {
  background: #34ade0;
  color: #34ade0;
}

.val {
  margin: 0 4px 0 5px;
  color: #1414e6;
}

.ohlc {
  margin: 0 2px 0 4px;
}

.ohlc em {
  font-style: normal;
  color: #245336;
}

.dim, .dim .val {
  color: #c8c8c8;
}

.ranges {
  display: flex;
  flex: none;
  align-items: center;
  height: 22px;
  padding-right: 1px;
  background: #e4e5e8;
  font-size: 11px;
  color: #8b8d91;
}

.ranges button {
  height: 14px;
  padding: 0 12px;
  border-left: 1px solid #b5b7bb;
  font-size: 11px;
  font-weight: 600;
}

.ranges button:first-child {
  border-left: none;
}

.ranges svg {
  width: 13px;
  height: 13px;
}

.ranges .auto {
  color: #3bb3e4;
}

.clock {
  margin: 0 12px 0 auto;
}

.clock b {
  font-weight: 600;
}

.side {
  flex: none;
  width: 22px;
  border-left: 5px solid #f0f2f6;
  background: #fff;
}

/* taskbar */
.taskbar {
  display: flex;
  flex: none;
  height: 40px;
  padding-left: 17px;
  gap: 4px;
  background: #82504a;
  border-top: 1px solid #6f433d;
}

.app {
  width: 58px;
  height: 39px;
}

.app svg {
  width: 32px;
  height: 32px;
}

.open {
  border: 1px solid #bb9a95;
  background: #97706a;
}

.stack {
  box-shadow: inset -4px 0 #97706a, inset -5px 0 #bb9a95, inset -8px 0 #97706a, inset -9px 0 #bb9a95;
  padding-right: 8px;
}

.current {
  border-color: #fff;
  background: #b59791;
  box-shadow: inset -3px 0 #97706a, inset -4px 0 #fff, inset -7px 0 #97706a, inset -8px 0 #fff;
}

.tray {
  display: flex;
  align-items: center;
  gap: 8px;
  margin-left: auto;
  padding-right: 23px;
  color: #fff;
}

.tray svg {
  width: 16px;
  height: 16px;
}

.tray-nan {
  font-family: "Noto Sans CJK TC", sans-serif;
  font-size: 15px;
  font-weight: 900;
  color: #e00000;
}

.time {
  margin-left: 8px;
  line-height: 17px;
  text-align: center;
}
```
